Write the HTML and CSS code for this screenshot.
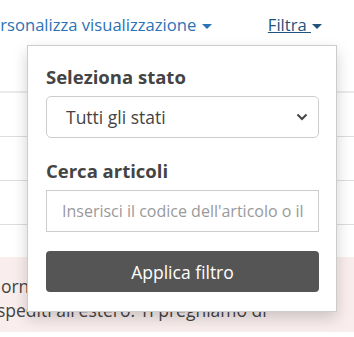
FILE: index.html
```html
<!DOCTYPE html>
<html lang="it">
<head>
    <meta charset="UTF-8">
    <meta name="viewport" content="width=device-width, initial-scale=1.0">
    <title>Filtra ordini</title>
    <link rel="stylesheet" href="styles.css">
</head>
<body>
    <div class="toolbar">
        <a href="#" class="view-link">Personalizza visualizzazione <span class="caret"></span></a>
        <div class="filter-menu">
            <a href="#" class="filter-link">Filtra <span class="caret"></span></a>
            <div class="dropdown">
                <label for="stato">Seleziona stato</label>
                <div class="select-wrap">
                    <select id="stato" name="stato">
                        <option>Tutti gli stati</option>
                        <option>Spediti</option>
                        <option>In attesa</option>
                    </select>
                    <svg class="chevron" width="12" height="8" viewBox="0 0 12 8">
                        <path d="M1.5 1.5 L6 6 L10.5 1.5" fill="none" stroke="#444" stroke-width="2"/>
                    </svg>
                </div>

                <label for="articoli">Cerca articoli</label>
                <input type="text" id="articoli" name="articoli" placeholder="Inserisci il codice dell'articolo o il nome">

                <button type="button">Applica filtro</button>
            </div>
        </div>
    </div>

    <div class="table">
        <div class="row"></div>
        <div class="row"></div>
        <div class="row"></div>
    </div>

    <div class="notice">
        <p>giorni in più, se vengono<br>spediti all'estero. Ti preghiamo di</p>
    </div>
</body>
</html>
```

FILE: styles.css
```css
body {
    margin: 0;
    font-family: "Open Sans", Arial, sans-serif;
    font-size: 17.5px;
    color: #444;
    background-color: #fff;
    overflow: hidden;
}

.toolbar {
    display: flex;
    align-items: center;
    height: 93px;
    padding: 0 32px 41px 0;
    margin-left: -19px;
    box-sizing: border-box;
    border-bottom: 2px solid #ebebeb;
    font-size: 16.6px;
    line-height: 22px;
}

.toolbar a {
    text-decoration: none;
}

.view-link {
    color: #2b72b6;
    white-space: nowrap;
}

.filter-menu {
    margin-left: auto;
    position: relative;
}

.filter-link {
    color: #23527c;
    text-decoration: underline !important;
}

.caret {
    display: inline-block;
    width: 0;
    height: 0;
    vertical-align: middle;
    border-top: 5px solid;
    border-left: 5px solid transparent;
    border-right: 5px solid transparent;
    margin-left: 1px;
}

.dropdown {
    position: absolute;
    top: 31px;
    right: -15px;
    width: 273px;
    padding: 19px 17px 19px 18px;
    background-color: #fff;
    border: 1px solid #ccc;
    box-shadow: 0 6px 14px rgba(0, 0, 0, 0.18);
    z-index: 2;
    font-size: 17.5px;
}

label {
    display: block;
    font-weight: bold;
    font-size: 18.5px;
    color: #444;
    line-height: 24px;
    margin-bottom: 7px;
}

.select-wrap {
    position: relative;
    margin-bottom: 21px;
}

select {
    display: block;
    width: 100%;
    height: 42px;
    padding: 0 40px 0 19px;
    border: 1px solid #ccc;
    border-radius: 5px;
    background-color: #fff;
    font-family: inherit;
    font-size: 17.5px;
    color: #444;
    -webkit-appearance: none;
    appearance: none;
}

.chevron {
    position: absolute;
    right: 11px;
    top: 17px;
    pointer-events: none;
}

input[type="text"] {
    display: block;
    width: 100%;
    height: 42px;
    box-sizing: border-box;
    padding: 0 15px;
    margin-bottom: 19px;
    border: 1px solid #ccc;
    border-radius: 0;
    font-family: inherit;
    font-size: 16px;
    color: #444;
}

input::placeholder {
    color: #999;
}

button {
    display: block;
    width: 100%;
    height: 41px;
    background-color: #555;
    color: #fff;
    border: none;
    border-radius: 4px;
    font-family: inherit;
    font-size: 17.5px;
    cursor: pointer;
}

.row {
    height: 43px;
    border-bottom: 1px solid #ddd;
}

.notice {
    margin-top: 32px;
    background-color: #f9eeed;
    padding: 17px 0 10px;
}

.notice p {
    margin: 0 0 0 -3px;
    text-indent: -10px;
    line-height: 24px;
    white-space: nowrap;
    color: #444;
}
```
